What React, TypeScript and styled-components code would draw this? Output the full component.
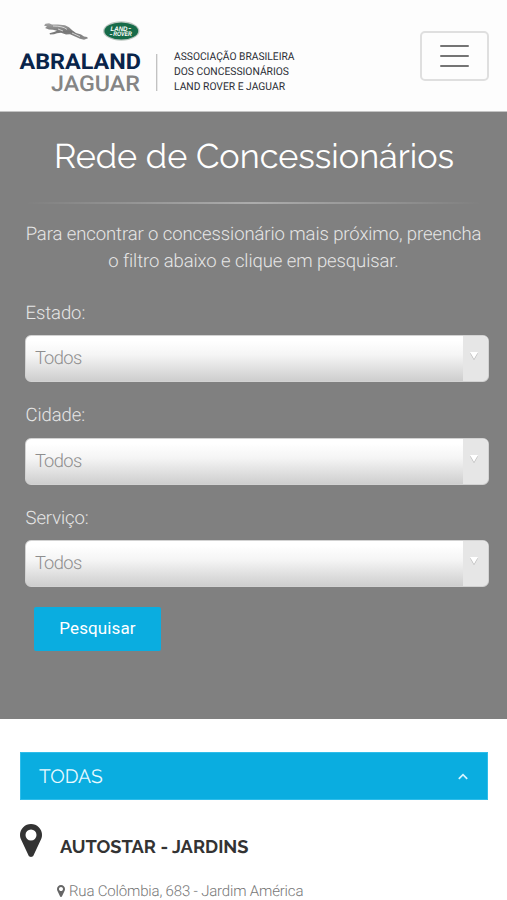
import React from "react";
import styled, { createGlobalStyle } from "styled-components";

const Global = createGlobalStyle`
  *, *::before, *::after { box-sizing: border-box; }
  body { margin: 0; background: #fff; font-family: Roboto, sans-serif; font-weight: 300; overflow: hidden; text-rendering: geometricPrecision; }
  h1, h2, h3, p { margin: 0; font-weight: inherit; }
`;

const Page = styled.div`
  width: 100%;
  height: 900px;
  overflow: hidden;
`;

const Header = styled.header`
  height: 112px;
  display: flex;
  justify-content: space-between;
  align-items: flex-start;
  padding: 0 18px 0 0;
  background: #fdfdfd;
  border-bottom: 1px solid #c4c4c4;
`;

const Logo = styled.svg`
  display: block;
  flex: none;
`;

const MenuButton = styled.button`
  width: 69px;
  height: 50px;
  margin-top: 31px;
  padding: 0;
  display: flex;
  flex-direction: column;
  align-items: center;
  justify-content: center;
  gap: 8px;
  background: #fdfdfd;
  border: 2px solid #dfdfdf;
  border-radius: 5px;
`;

const MenuBar = styled.span`
  width: 29px;
  height: 2px;
  border-radius: 1px;
  background: #747474;
`;

const Search = styled.section`
  height: 607px;
  padding: 22px 18px 0 25px;
  background: #808080;
  color: #e6e6e6;
`;

const Title = styled.h1`
  height: 46px;
  font: 400 34.2px/47px Raleway, Lato, sans-serif;
  color: #fff;
  text-align: center;
  white-space: nowrap;
  margin-right: 6px;
`;

const Divider = styled.div`
  height: 2px;
  margin: 22px 7px 17px 0;
  background: linear-gradient(90deg, rgba(255, 255, 255, 0), rgba(255, 255, 255, 0.35), rgba(255, 255, 255, 0));
`;

const Intro = styled.p`
  font-size: 18.5px;
  line-height: 27px;
  letter-spacing: -0.09px;
  text-align: center;
  white-space: nowrap;
  margin: 0 7px 0 0;
`;

const Field = styled.div`
  height: 102.5px;
`;

const Fields = styled.div`
  padding-top: 23.5px;
`;

const Label = styled.label`
  display: block;
  padding-left: 0.5px;
  font-size: 18.5px;
  line-height: 28px;
  letter-spacing: -0.09px;
  height: 36.5px;
`;

const Select = styled.div`
  height: 47px;
  display: flex;
  align-items: stretch;
  border: 1px solid #d2d2d2;
  border-radius: 6px;
  overflow: hidden;
  color: #8e8e8e;
  font-size: 18.3px;
  line-height: 46px;
  background: linear-gradient(#fff 10%, #f5f5f5 42%, #cecece);
`;

const Value = styled.span`
  flex: 1;
  padding-left: 9px;
  letter-spacing: -0.5px;

  &::first-letter {
    letter-spacing: -2px;
  }
`;

const Arrow = styled.span`
  width: 25px;
  display: flex;
  justify-content: center;
  padding: 15px 3px 0 0;
  background: #e6e6e6;
`;

const Submit = styled.button`
  display: block;
  width: 127px;
  height: 44px;
  margin: 0.5px 0 0 9px;
  padding: 0;
  border: 0;
  border-radius: 2px;
  background: #0aade0;
  color: #fff;
  font: 400 17px/43px Roboto, sans-serif;
  letter-spacing: 0.1px;
`;

const Results = styled.section`
  padding: 33px 19px 0 20px;
`;

const GroupBar = styled.div`
  height: 48px;
  display: flex;
  align-items: center;
  justify-content: space-between;
  padding: 0 18px 0 18px;
  background: #0aade0;
  border: 1px solid #2fbdea;
  color: #e9faff;
`;

const GroupTitle = styled.h2`
  padding-top: 1px;
  font: 400 19.3px/46px Raleway, Lato, sans-serif;
`;

const Dealer = styled.div`
  display: flex;
  align-items: flex-start;
  padding-top: 24px;
  height: 77px;
`;

const DealerName = styled.h3`
  margin: 11px 0 0 18px;
  font: 700 18.3px/26px Raleway, Lato, sans-serif;
  color: #333;
  white-space: nowrap;
`;

const Address = styled.p`
  display: flex;
  align-items: center;
  gap: 4px;
  padding-left: 37px;
  font-size: 15px;
  line-height: 28px;
  letter-spacing: -0.17px;
  color: #777;
  white-space: nowrap;
`;

const PinIcon = styled.svg<{ $dark?: boolean }>`
  display: block;
  flex: none;
  fill: ${(p) => (p.$dark ? "#333" : "#666")};
`;

const Pin = ({ w, h, dark }: { w: number; h: number; dark?: boolean }) => (
  <PinIcon width={w} height={h} viewBox="0 128 1024 1536" preserveAspectRatio="none" $dark={dark}>
    <path d="M768 640q0-106-75-181t-181-75-181 75-75 181 75 181 181 75 181-75 75-181zm256 0q0 109-33 179l-364 774q-16 33-47.5 52t-67.5 19-67.5-19-46.5-52l-365-774q-33-70-33-179 0-212 150-362t362-150 362 150 150 362z" />
  </PinIcon>
);

const BrandLogo = () => (
  <Logo width="310" height="111" viewBox="0 0 310 111" role="img">
    <defs>
      <linearGradient id="cat" x1="0" y1="0" x2="0" y2="1">
        <stop offset="0" stopColor="#a4a4a4" />
        <stop offset="0.5" stopColor="#777" />
        <stop offset="1" stopColor="#8c8c8c" />
      </linearGradient>
    </defs>
    <path
      d="M44 25.5 45.5 23.8 49 23.3 52 24.4 58 24.4 65 25.2 69 27.3 72.5 30.6 76 33 81 34.4 84 36.4 87 37 88 38.2 84 39.7 80 38.8 75 36.4 70 34.2 66 34.4 61 32.7 57 33.2 54 34.2 50 34.6 49.5 33.3 54 32.1 57 30.8 53 29.8 49 29.4 45 28 47 26.6Z"
      fill="url(#cat)"
    />
    <path d="M53 26C59 26.1 64 26.8 67 29.4M58 29 63 31M72 33 80 36.6" fill="none" stroke="#e4e4e4" strokeWidth="0.8" />
    <ellipse cx="121.3" cy="31" rx="18.2" ry="9.7" fill="#bcc6c0" />
    <ellipse cx="121.3" cy="31" rx="16.9" ry="8.6" fill="#176b49" />
    <g fill="#fff" fontFamily="Liberation Sans, sans-serif" fontWeight="700" fontStyle="italic" fontSize="6.4">
      <text x="110.5" y="30.6" textLength="17" lengthAdjust="spacingAndGlyphs">LAND</text>
      <text x="128.2" y="30.4" textLength="3" lengthAdjust="spacingAndGlyphs">-</text>
      <text x="109.5" y="36.1" textLength="3" lengthAdjust="spacingAndGlyphs">-</text>
      <text x="113.3" y="36.3" textLength="18.5" lengthAdjust="spacingAndGlyphs">ROVER</text>
    </g>
    <g fontFamily="Roboto, sans-serif">
      <text x="19.5" y="69.3" fontSize="21.8" fontWeight="700" fill="#09244a" textLength="121.5" lengthAdjust="spacingAndGlyphs">ABRALAND</text>
      <text x="51" y="91.3" fontSize="21.8" fontWeight="500" fill="#858585" textLength="89" lengthAdjust="spacingAndGlyphs">JAGUAR</text>
      <g fontSize="10.8" fontWeight="400" fill="#2b2d35">
        <text x="174" y="60.3" textLength="120.5" lengthAdjust="spacingAndGlyphs">ASSOCIAÇÃO BRASILEIRA</text>
        <text x="174" y="75.3" textLength="115" lengthAdjust="spacingAndGlyphs">DOS CONCESSIONÁRIOS</text>
        <text x="174" y="90.3" textLength="111" lengthAdjust="spacingAndGlyphs">LAND ROVER E JAGUAR</text>
      </g>
    </g>
    <path d="M156.7 54V91" stroke="#bfbfbf" strokeWidth="1.3" />
  </Logo>
);

const fields = ["Estado:", "Cidade:", "Serviço:"];

export default function App() {
  return (
    <Page>
      <Global />
      <Header>
        <BrandLogo />
        <MenuButton aria-label="Menu">
          <MenuBar />
          <MenuBar />
          <MenuBar />
        </MenuButton>
      </Header>
      <Search>
        <Title>Rede de Concessionários</Title>
        <Divider />
        <Intro>
          Para encontrar o concessionário mais próximo, preencha
          <br />o filtro abaixo e clique em pesquisar.
        </Intro>
        <Fields>
          {fields.map((name) => (
            <Field key={name}>
              <Label>{name}</Label>
              <Select>
                <Value>Todos</Value>
                <Arrow>
                  <svg width="10" height="10" viewBox="0 0 10 10">
                    <path d="M1 2.2H9L5 9.2Z" fill="#bbb" />
                    <path d="M1 1H9L5 8Z" fill="#fff" />
                  </svg>
                </Arrow>
              </Select>
            </Field>
          ))}
        </Fields>
        <Submit>Pesquisar</Submit>
      </Search>
      <Results>
        <GroupBar>
          <GroupTitle>TODAS</GroupTitle>
          <svg width="12" height="10" viewBox="0 0 12 10">
            <path d="M1.8 7.8 6 3.6 10.2 7.8" fill="none" stroke="#d5f4ff" strokeWidth="1.7" />
          </svg>
        </GroupBar>
        <Dealer>
          <Pin w={22} h={33} dark />
          <DealerName>AUTOSTAR - JARDINS</DealerName>
        </Dealer>
        <Address>
          <Pin w={8} h={12} />
          Rua Colômbia, 683 - Jardim América
        </Address>
      </Results>
    </Page>
  );
}
